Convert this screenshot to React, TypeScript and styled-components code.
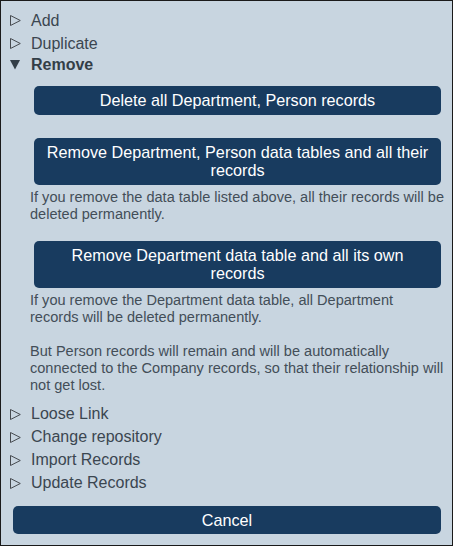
import React, { useState } from "react";
import styled, { createGlobalStyle } from "styled-components";

const GlobalStyle = createGlobalStyle`
  html, body {
    margin: 0;
    padding: 0;
    background: #ffffff;
  }
  * {
    box-sizing: border-box;
  }
`;

const Frame = styled.div`
  width: 453px;
  height: 546px;
  border: 1px solid #1a1a1a;
  background: #c8d5e0;
  padding: 8px 7px 11px 8px;
  font-family: "Liberation Sans", Arial, sans-serif;
  color: #3b4650;
  display: flex;
  flex-direction: column;
`;

const Row = styled.div<{ $open?: boolean }>`
  height: ${(p) => (p.$open ? 21 : 23)}px;
  margin-top: ${(p) => (p.$open ? -1 : 0)}px;
  display: flex;
  align-items: center;
  font-size: 16px;
  font-weight: ${(p) => (p.$open ? 700 : 400)};
  color: ${(p) => (p.$open ? "#333e47" : "#3b4650")};
  cursor: pointer;
  user-select: none;
`;

const Arrow = styled.span`
  width: 22px;
  padding-left: 1px;
  display: flex;
  align-items: center;
`;

const Section = styled.div`
  padding-left: 21px;
  padding-bottom: 9px;
  display: flex;
  flex-direction: column;
`;

const Action = styled.div<{ $gap: number }>`
  margin-top: ${(p) => p.$gap}px;
  display: flex;
  flex-direction: column;
`;

const Button = styled.button`
  margin: 0 4px;
  padding: 5px 9px;
  border: none;
  border-radius: 5px;
  background: #183b5f;
  color: #ffffff;
  font-family: "Liberation Sans", Arial, sans-serif;
  font-size: 16.2px;
  line-height: 18.5px;
  text-align: center;
  cursor: pointer;
`;

const Note = styled.p`
  margin: 4px 0 0;
  padding-right: 1px;
  font-size: 14.55px;
  line-height: 17px;
  color: #434e58;
`;

const Footer = styled.div`
  margin-top: auto;
  display: flex;
  flex-direction: column;
`;

const Outline = () => (
  <svg width="11" height="11" viewBox="0 0 11 11">
    <polygon
      points="0.5,0.5 10.3,5.5 0.5,10.5"
      fill="none"
      stroke="#474b50"
      strokeWidth="1"
    />
  </svg>
);

const Filled = () => (
  <svg width="11" height="10" viewBox="0 0 11 10">
    <polygon points="0,0 10,0 5,9.5" fill="#333e47" />
  </svg>
);

const TOP = ["Add", "Duplicate"];
const BOTTOM = ["Loose Link", "Change repository", "Import Records", "Update Records"];

export default function App() {
  const [open, setOpen] = useState("Remove");

  const toggle = (name: string) => setOpen(open === name ? "" : name);

  const renderRow = (name: string) => (
    <Row key={name} $open={open === name} onClick={() => toggle(name)}>
      <Arrow>{open === name ? <Filled /> : <Outline />}</Arrow>
      {name}
    </Row>
  );

  return (
    <>
      <GlobalStyle />
      <Frame>
        {TOP.map(renderRow)}
        {renderRow("Remove")}
        {open === "Remove" && (
          <Section>
            <Action $gap={11}>
              <Button>Delete all Department, Person records</Button>
            </Action>
            <Action $gap={23}>
              <Button>Remove Department, Person data tables and all their records</Button>
              <Note>
                If you remove the data table listed above, all their records will be deleted
                permanently.
              </Note>
            </Action>
            <Action $gap={18}>
              <Button>Remove Department data table and all its own records</Button>
              <Note>
                If you remove the Department data table, all Department records will be
                deleted permanently.
                <br />
                <br />
                But Person records will remain and will be automatically connected to the
                Company records, so that their relationship will not get lost.
              </Note>
            </Action>
          </Section>
        )}
        {BOTTOM.map(renderRow)}
        <Footer>
          <Button>Cancel</Button>
        </Footer>
      </Frame>
    </>
  );
}
